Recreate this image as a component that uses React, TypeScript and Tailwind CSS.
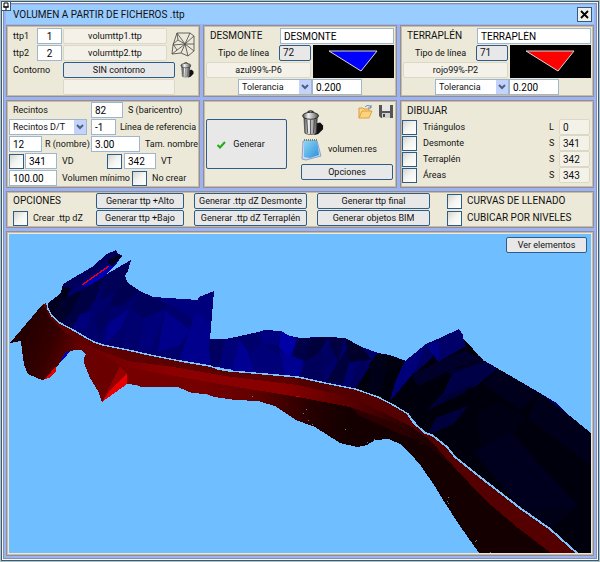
import React from "react";

type BoxProps = { className?: string };

function TextBox({ label, value, className = "" }: BoxProps & { label: string; value: string }) {
  return (
    <input
      type="text"
      aria-label={label}
      defaultValue={value}
      className={`h-4 min-w-0 rounded-none border border-[#9fb6cc] bg-white px-[3px] text-[10px] leading-[14px] text-black ${className}`}
    />
  );
}

function ReadOnlyBox({ label, value, className = "" }: BoxProps & { label: string; value: string }) {
  return (
    <input
      type="text"
      aria-label={label}
      value={value}
      readOnly
      className={`h-4 min-w-0 rounded-[2px] border border-[#dcd8c6] bg-[#f4f2e8] px-[3px] leading-[14px] ${className}`}
    />
  );
}

function PushButton({ children, className = "" }: BoxProps & { children: React.ReactNode }) {
  return (
    <button
      type="button"
      className={`flex items-center justify-center rounded-[2px] border border-[#2d5c88] bg-[#e8e8e8] leading-[14px] whitespace-nowrap ${className}`}
    >
      {children}
    </button>
  );
}

function Tick({ id, label }: { id: string; label?: string }) {
  return (
    <input
      id={id}
      type="checkbox"
      aria-label={label}
      className="size-[15px] shrink-0 appearance-none border border-[#2d5c88] bg-linear-to-br from-[#d6d6d0] via-[#f4f4f1] to-white checked:bg-[#2d5c88]"
    />
  );
}

function DropDown({ label, value, className = "" }: BoxProps & { label: string; value: string }) {
  return (
    <div className={`relative h-4 shrink-0 ${className}`}>
      <select
        aria-label={label}
        className="block h-4 w-full appearance-none border border-[#9fb6cc] bg-white pr-3 pl-[3px] leading-[14px]"
      >
        <option>{value}</option>
      </select>
      <span className="pointer-events-none absolute top-px right-px flex h-[14px] w-3 items-center justify-center bg-[#c3d3fb]">
        <svg width="8" height="6" viewBox="0 0 8 6">
          <path d="M1 1l3 3 3-3" fill="none" stroke="#4d6185" strokeWidth="2" />
        </svg>
      </span>
    </div>
  );
}

function Panel({ children, className = "" }: BoxProps & { children: React.ReactNode }) {
  return (
    <section className="border border-[#8e8f9c]">
      <div className={`h-full border border-[#c8bda2] bg-[#ece9d8] ${className}`}>{children}</div>
    </section>
  );
}

function TrashIcon({ className = "" }: BoxProps) {
  return (
    <svg viewBox="0 0 24 27" className={`shrink-0 ${className}`} aria-hidden="true">
      <defs>
        <linearGradient id="metal" x1="0" x2="1" y1="0" y2="0">
          <stop offset="0" stopColor="#4a4a4a" />
          <stop offset="0.35" stopColor="#f0f0f0" />
          <stop offset="0.7" stopColor="#a0a0a0" />
          <stop offset="1" stopColor="#4a4a4a" />
        </linearGradient>
      </defs>
      <path d="M15 14l5-1 3 3v4l-5 5-4 1z" fill="#111" />
      <path d="M3 7h14l-1 17c-2 2-10 2-12 0z" fill="url(#metal)" stroke="#333" strokeWidth="0.7" />
      <path d="M6 10l1 14M10 10v15M14 10l-1 14" stroke="#444" strokeWidth="0.9" />
      <ellipse cx="10" cy="6" rx="8.3" ry="3.6" fill="url(#metal)" stroke="#222" strokeWidth="0.9" />
      <path d="M7 3c0-3 6-3 6 0" fill="none" stroke="#333" strokeWidth="1.3" />
    </svg>
  );
}

function MeshIcon() {
  return (
    <svg viewBox="0 0 24 25" className="h-[25px] w-6 shrink-0" aria-hidden="true">
      <path
        d="M6 1h13l4 3v15l-6 5-7-3-9 1 1-9zM6 1l8 11L19 1M2 12l5-4 7 4 9-8M14 12l-4 9M14 12l3 12M14 12L1 22M2 13l12-1M14 12l9 0M14 12l9 7M6 1l1 7M2 12l4 6"
        fill="none"
        stroke="#555"
        strokeWidth="0.9"
      />
    </svg>
  );
}

type MaterialProps = { title: string; line: string; colour: string; fill: string };

function MaterialPanel({ title, line, colour, fill }: MaterialProps) {
  return (
    <Panel className="flex flex-col gap-px pt-px pr-px">
      <div className="flex h-4 items-center">
        <span className="w-[75px] shrink-0 pl-[5px] text-[10px]">{title}</span>
        <TextBox label={title} value={title} className="flex-1" />
      </div>
      <div className="flex gap-[2px]">
        <div className="flex w-[106px] shrink-0 flex-col gap-px pl-px">
          <div className="flex h-4 items-center justify-between">
            <span className="pl-3 whitespace-nowrap">Tipo de línea</span>
            <PushButton className="h-4 w-8 justify-start! pl-[3px] text-[10px]">{line}</PushButton>
          </div>
          <ReadOnlyBox label="Color" value={colour} className="w-full text-center" />
        </div>
        <svg viewBox="0 0 81 33" className="h-[33px] min-w-0 flex-1 bg-black" aria-hidden="true">
          <path d="M16 6h48L48 26z" fill={fill} stroke="#d8d8d8" strokeWidth="1" />
        </svg>
      </div>
      <div className="flex h-4 pl-[33px]">
        <DropDown label="Criterio" value="Tolerancia" className="w-[74px]" />
        <TextBox label="Valor" value="0.200" className="w-[50px]" />
      </div>
    </Panel>
  );
}

const drawRows = [
  { id: "tri", name: "Triángulos", kind: "L", code: "0" },
  { id: "des", name: "Desmonte", kind: "S", code: "341" },
  { id: "ter", name: "Terraplén", kind: "S", code: "342" },
  { id: "are", name: "Áreas", kind: "S", code: "343" },
];

const blueFacets: [string, string][] = [
  ["61,293 63,284 92,267 107,254 116,250 118,254 105,264 82,282 70,292", "#00005c"],
  ["82,284 110,264 122,255 117,263 105,276 92,284 84,287", "#0000b4"],
  ["107,262 118,254 122,256 112,266", "#00001c"],
  ["62,286 70,288 67,298 61,294", "#000018"],
  ["47,304 61,293 67,298 60,323 50,313", "#00001e"],
  ["60,300 82,290 72,312 60,323 54,316", "#00002c"],
  ["82,290 105,276 95,300 75,330 60,323 72,312", "#000044"],
  ["105,276 131,260 128,271 125,276 118,290 100,302", "#000058"],
  ["125,276 128,283 140,291 122,306 108,306", "#000052"],
  ["80,314 90,312 88,328 72,329", "#00007c"],
  ["95,318 112,300 108,322 98,336", "#000060"],
  ["140,291 153,297 170,300 150,322 130,312", "#00005e"],
  ["153,297 198,300 209,330 180,310", "#00007c"],
  ["108,324 130,308 120,330 104,344", "#00008a"],
  ["130,308 144,318 140,336 122,346", "#000070"],
  ["144,318 165,310 152,350 138,350", "#00007a"],
  ["165,310 190,330 180,345 158,352", "#00008a"],
  ["199,297 214,291 210,325 196,312", "#00007c"],
  ["196,312 210,325 210,366 180,360 186,340", "#00008c"],
  ["209,340 225,339 220,362 210,366", "#000060"],
  ["225,339 240,340 234,370 220,368", "#000078"],
  ["240,340 248,352 254,372 232,371", "#000092"],
  ["240,336 258,332 248,352", "#00006a"],
  ["258,332 264,330 281,331 278,345 262,343", "#000080"],
  ["281,331 290,336 297,339 290,358 279,348", "#0000a6"],
  ["262,343 280,357 282,375 254,373 250,354", "#000078"],
  ["280,352 292,356 304,358 300,378 284,376", "#000090"],
  ["297,339 309,338 306,362 293,356", "#000048"],
  ["309,338 328,337 320,352 306,361", "#00003c"],
  ["320,352 330,343 336,360 322,372", "#000060"],
  ["306,361 322,352 324,382 300,377", "#00005a"],
  ["328,337 345,338 338,362 332,350", "#000042"],
  ["338,362 350,344 352,352 343,384 326,382", "#00003c"],
  ["345,338 362,347 372,360 350,362", "#00002a"],
  ["356,368 362,360 370,366 356,388 350,387", "#00005c"],
  ["370,366 378,353 392,356 380,392 368,394", "#000018"],
  ["378,353 392,356 405,361 390,372", "#00000f"],
  ["405,361 415,353 426,344 418,368 390,401 396,380", "#000078"],
  ["426,344 440,338 432,358 414,374", "#000062"],
  ["426,344 446,340 438,362", "#000086"],
  ["440,338 459,329 463,338 466,346 438,362", "#000068"],
  ["412,376 438,362 466,350 483,361 460,366 418,386", "#00002a"],
  ["446,372 466,366 483,361 497,368 465,378", "#000030"],
  ["452,374 485,362 497,369 476,386 440,398 428,410 444,392", "#000046"],
  ["440,398 478,382 462,394 428,410", "#000034"],
  ["436,418 468,406 454,424 440,430 428,434", "#00003c"],
  ["484,384 497,369 540,393 520,410", "#00001c"],
  ["476,414 498,402 526,418 510,440 480,446", "#000014"],
  ["474,452 510,432 578,506 552,528 520,508", "#00001e"],
  ["540,393 565,412 591,433 591,465 528,418", "#00001a"],
  ["526,510 578,506 552,528", "#000016"],
];

const speckles: [number, number][] = [
  [252, 396], [306, 409], [303, 413], [308, 420], [312, 424], [345, 429], [367, 442], [374, 439], [448, 497],
  [447, 501], [448, 503], [476, 540], [475, 541], [490, 552], [478, 355], [483, 360], [137, 385], [207, 394],
];

const redOutline =
  "43,304 10,343 21,341 22,350 24,365 28,374 35,377 42,380 48,378 56,368 60,361 68,352 74,350 81,350 86,354 84,358 84,363 90,378 98,391 102,402 127,384 137,385 141,387 178,387 192,393 205,394 215,397 235,400 258,401 275,406 296,420 315,427 340,443 357,447 367,445 375,440 389,439 400,444 410,453 421,466 434,485 445,503 460,526 479,553 577,553 550,529 520,508 480,477 455,457 447,447 432,435 425,433 413,422 408,414 395,406 378,397 355,389 325,383 298,377 265,374 230,371 210,366 180,361 150,355 128,350 103,345 94,342 75,331 60,323 52,316 48,309 47,303";

function Terrain() {
  return (
    <svg viewBox="9 234 582 319" className="block w-full bg-[#6fbeff]" shapeRendering="crispEdges" role="img" aria-label="Modelo del terreno">
      <defs>
        <linearGradient id="low" gradientUnits="userSpaceOnUse" x1="200" y1="0" x2="350" y2="0">
          <stop offset="0" stopColor="#760000" />
          <stop offset="0.35" stopColor="#620000" />
          <stop offset="0.75" stopColor="#240000" />
          <stop offset="1" stopColor="#140000" />
        </linearGradient>
        <linearGradient id="mid" gradientUnits="userSpaceOnUse" x1="60" y1="0" x2="420" y2="0">
          <stop offset="0" stopColor="#600000" />
          <stop offset="0.3" stopColor="#8c0000" />
          <stop offset="0.62" stopColor="#880000" />
          <stop offset="0.85" stopColor="#4c0000" />
          <stop offset="1" stopColor="#200000" />
        </linearGradient>
        <linearGradient id="west" gradientUnits="userSpaceOnUse" x1="25" y1="330" x2="80" y2="352">
          <stop offset="0" stopColor="#240000" />
          <stop offset="0.5" stopColor="#360000" />
          <stop offset="1" stopColor="#680000" />
        </linearGradient>
      </defs>
      <polygon
        points="47,304 61,293 63,284 77,276 92,268 107,254 116,250 118,254 122,255 117,263 105,275 131,260 128,271 125,276 128,283 140,291 153,297 170,300 190,301 198,300 199,297 214,291 210,339 225,339 240,336 258,332 264,330 281,331 290,336 300,338 320,337 345,338 362,347 378,353 390,355 406,361 415,353 426,344 440,338 459,329 463,335 463,338 466,346 475,355 483,360 497,368 510,376 540,393 555,402 565,412 591,433 591,553 577,553 520,508 455,457 425,433 408,414 378,397 325,383 265,374 210,366 128,350 94,342 60,323 48,309"
        fill="#00006c"
      />
      <polygon
        points="378,353 406,361 426,344 440,338 463,338 483,360 540,393 591,433 591,553 577,553 520,508 455,457 425,433 408,414 378,397 350,388"
        fill="#00000c"
      />
      {blueFacets.map(([points, fill]) => (
        <polygon key={points} points={points} fill={fill} />
      ))}
      <path d="M82 285l27-19" stroke="#f00000" strokeWidth="1.3" />
      <polygon points={redOutline} fill="url(#low)" />
      <polygon
        points="43,304 10,343 21,341 22,350 24,365 28,374 42,380 48,378 56,368 68,352 74,350 81,350 86,354 92,345 66,333 50,316"
        fill="url(#west)"
      />
      <polygon points="44,379 51,372 56,366 56,372 49,378" fill="#e00000" />
      <polygon points="60,361 66,352 70,351 64,359" fill="#0000c0" />
      <polygon points="84,358 90,346 120,366 127,384 102,402 98,391 90,378 84,363" fill="#6a0000" />
      <polygon points="120,366 127,374 112,388 102,402" fill="#960000" />
      <polygon points="127,373 127,384 102,402 112,388" fill="#e80000" />
      <polygon points="47,305 52,316 60,323 75,331 94,342 103,345 128,350 180,361 225,371 298,378 355,389 395,406 413,422 436,440 453,466 430,448 400,427 350,407 298,397 225,385 120,366 100,352 66,333 50,318 44,305" fill="url(#mid)" />
      <polygon points="94,342 128,350 210,366 225,370 298,378 298,385 225,376 180,368 128,361 104,352 86,345 66,333 60,323 75,331" fill="#5c0000" />
      <polygon points="298,377 325,383 355,389 378,397 395,406 408,414 413,422 425,433 432,435 447,447 455,457 480,477 520,508 550,529 577,553 551,553 518,528 485,500 453,466 430,440 412,427 392,417 350,397 298,385" fill="#540000" />
      <polygon points="350,407 392,422 418,440 400,434 360,416" fill="#2c0000" />
      <path d="M296 397l4-1" stroke="#c00000" strokeWidth="1" />
      <polyline
        points="47,303 48,309 52,316 60,323 75,331 85,337 94,342 103,345 128,350 150,355 180,361 210,366 218,369 230,371 265,374 298,377 325,383 355,389 378,397 395,406 408,414 413,422 425,433 432,435 447,447 455,457 480,477 520,508 550,529 578,554"
        fill="none"
        stroke="#7cc4fa"
        strokeWidth="1.5"
      />
      <polyline points="408,414 413,422 425,433 432,435 447,447 455,457 480,477 520,508 550,529 578,554" fill="none" stroke="#7cc4fa" strokeWidth="2" />
      {speckles.map(([x, y]) => (
        <rect key={`${x}-${y}`} x={x} y={y} width="1" height="1" fill="#5a7fa8" />
      ))}
    </svg>
  );
}

export default function App() {
  return (
    <main className="relative min-h-screen bg-[#b4c3b8] p-px font-[Roboto,'Liberation_Sans',sans-serif] text-[9px] leading-[14px] text-[#111]">
      <div className="border border-[#35597f] bg-[#f4f8fb] p-px">
        <div className="border border-[#8290b4] bg-[#9db2ee] px-[2px] pt-px pb-[2px]">
          <header className="flex h-[19px] items-center justify-between bg-[#99ccff] pr-[2px] pl-[7px]">
            <h1 className="text-[10px]">VOLUMEN A PARTIR DE FICHEROS .ttp</h1>
            <button type="button" aria-label="Cerrar" className="flex size-[15px] items-center justify-center border border-[#35597f] bg-[#f0efe8]">
              <svg width="9" height="9" viewBox="0 0 9 9">
                <path d="M1 1l7 7M8 1L1 8" stroke="#000" strokeWidth="1.8" />
              </svg>
            </button>
          </header>

          <div className="mt-px flex flex-col gap-[3px]">
            <div className="grid grid-cols-3 gap-[3px]">
              <Panel className="flex flex-col gap-px pt-px pr-[3px] pl-[5px]">
                <div className="flex items-center gap-1">
                  <div className="flex min-w-0 flex-1 flex-col gap-px">
                    <div className="flex h-4 items-center">
                      <span className="w-6 shrink-0">ttp1</span>
                      <TextBox label="ttp1" value="1" className="mr-px w-[25px] text-center" />
                      <ReadOnlyBox label="Fichero ttp1" value="volumttp1.ttp" className="flex-1 text-center" />
                    </div>
                    <div className="flex h-4 items-center">
                      <span className="w-6 shrink-0">ttp2</span>
                      <TextBox label="ttp2" value="2" className="mr-px w-[25px] text-center" />
                      <ReadOnlyBox label="Fichero ttp2" value="volumttp2.ttp" className="flex-1 text-center" />
                    </div>
                  </div>
                  <MeshIcon />
                </div>
                <div className="flex h-4 items-center">
                  <span className="w-[50px] shrink-0">Contorno</span>
                  <PushButton className="mr-1 h-4 flex-1">SIN contorno</PushButton>
                  <TrashIcon className="h-4 w-4" />
                </div>
                <div className="flex h-4 pr-5 pl-[50px]">
                  <ReadOnlyBox label="Fichero de contorno" value="" className="flex-1" />
                </div>
              </Panel>
              <MaterialPanel title="DESMONTE" line="72" colour="azul99%-P6" fill="#0000ff" />
              <MaterialPanel title="TERRAPLÉN" line="71" colour="rojo99%-P2" fill="#ff0000" />
            </div>

            <div className="grid grid-cols-3 gap-[3px]">
              <Panel className="flex flex-col gap-px pl-px whitespace-nowrap">
                <div className="flex h-4 items-center">
                  <span className="w-[82px] pl-1">Recintos</span>
                  <TextBox label="Recintos" value="82" className="w-8" />
                  <span className="pl-[5px]">S (baricentro)</span>
                </div>
                <div className="flex h-4 items-center">
                  <DropDown label="Tipo de recintos" value="Recintos D/T" className="mr-1 w-[78px]" />
                  <TextBox label="Línea de referencia" value="-1" className="w-[25px]" />
                  <span className="pl-1">Línea de referencia</span>
                </div>
                <div className="flex h-4 items-center">
                  <TextBox label="R (nombre)" value="12" className="w-[33px]" />
                  <span className="w-[49px] pl-[3px]">R (nombre)</span>
                  <TextBox label="Tam. nombre" value="3.00" className="w-[49px]" />
                  <span className="pl-[5px]">Tam. nombre</span>
                </div>
                <div className="flex h-4 items-center">
                  <Tick id="vd" label="Activar VD" />
                  <TextBox label="VD" value="341" className="ml-px w-8" />
                  <span className="w-[50px] pl-[5px]">VD</span>
                  <Tick id="vt" label="Activar VT" />
                  <TextBox label="VT" value="342" className="ml-[2px] w-8" />
                  <span className="pl-[5px]">VT</span>
                </div>
                <div className="flex h-4 items-center">
                  <TextBox label="Volumen mínimo" value="100.00" className="w-12" />
                  <span className="w-[75px] pl-[5px]">Volumen mínimo</span>
                  <Tick id="nocrear" />
                  <label htmlFor="nocrear" className="pl-[5px]">No crear</label>
                </div>
              </Panel>

              <Panel className="flex items-center justify-between pr-[2px] pl-px">
                <PushButton className="h-[50px] w-[81px] gap-[6px] pr-3">
                  <svg width="11" height="11" viewBox="0 0 11 11" aria-hidden="true">
                    <path d="M1.500 6l2.500 2.500 5-5.500" fill="none" stroke="#1fae10" strokeWidth="2" />
                  </svg>
                  Generar
                </PushButton>
                <div className="flex h-full w-[92px] flex-col pt-[2px]">
                  <div className="flex h-8 items-start justify-between">
                    <TrashIcon className="mt-[6px] h-[26px] w-[23px]" />
                    <div className="flex gap-[6px]">
                      <svg width="15" height="15" viewBox="0 0 15 15" aria-label="Abrir" role="img">
                        <path d="M1 14V4h4l1 1h5v3" fill="#f8d98a" stroke="#d99a3c" />
                        <path d="M1 14l3-7h10l-3 7z" fill="#fbd37c" stroke="#e0a040" />
                        <path d="M7 3c2-2 4-2 6 0m0-2v3h-3" fill="none" stroke="#5a82b8" />
                      </svg>
                      <svg width="14" height="15" viewBox="0 0 14 15" aria-label="Guardar" role="img">
                        <path d="M0 1h14v13H2l-2-2z" fill="#555" />
                        <path d="M3 1h8v6H3z" fill="#e6e6e6" />
                        <path d="M3 9h8v5H3z" fill="#cfcfcf" />
                        <path d="M4 10h2v3H4z" fill="#444" />
                      </svg>
                    </div>
                  </div>
                  <div className="flex h-[26px] items-center gap-[6px]">
                    <svg width="21" height="23" viewBox="0 0 21 23" aria-hidden="true">
                      <defs>
                        <linearGradient id="pad" x1="0" y1="0" x2="1" y2="1">
                          <stop offset="0" stopColor="#8fd8f8" />
                          <stop offset="1" stopColor="#2c8fd8" />
                        </linearGradient>
                      </defs>
                      <path d="M2 3L1 21l4 1 15-4-4-15z" fill="#c8d8f0" stroke="#7e8fc0" strokeWidth="0.800" />
                      <path d="M3 2h13l2 15-9 3-6-1z" fill="url(#pad)" />
                      <path d="M3 2h13" stroke="#8a7a50" strokeWidth="2" strokeDasharray="1 1" />
                    </svg>
                    <span>volumen.res</span>
                  </div>
                  <PushButton className="mt-[2px] h-4 w-full">Opciones</PushButton>
                </div>
              </Panel>

              <Panel className="flex flex-col pt-px pr-[2px]">
                <h2 className="flex h-4 items-center pl-[5px] text-[10px]">DIBUJAR</h2>
                {drawRows.map((row) => (
                  <div key={row.id} className="flex h-4 items-center">
                    <Tick id={row.id} />
                    <label htmlFor={row.id} className="flex-1 pl-[6px]">{row.name}</label>
                    <span className="w-[10px]">{row.kind}</span>
                    <ReadOnlyBox label={`${row.name} ${row.kind}`} value={row.code} className="w-[31px] text-[10px]" />
                  </div>
                ))}
              </Panel>
            </div>

            <Panel className="flex pl-[5px] whitespace-nowrap">
              <div className="flex w-[83px] shrink-0 flex-col gap-px">
                <h2 className="flex h-4 items-center text-[10px]">OPCIONES</h2>
                <div className="flex h-4 items-center">
                  <Tick id="creardz" />
                  <label htmlFor="creardz" className="pl-[5px]">Crear .ttp dZ</label>
                </div>
              </div>
              <div className="mr-[10px] flex w-[88px] flex-col gap-px">
                <PushButton className="h-4">Generar ttp +Alto</PushButton>
                <PushButton className="h-4">Generar ttp +Bajo</PushButton>
              </div>
              <div className="mr-[10px] flex w-[113px] flex-col gap-px">
                <PushButton className="h-4">Generar .ttp dZ Desmonte</PushButton>
                <PushButton className="h-4">Generar .ttp dZ Terraplén</PushButton>
              </div>
              <div className="mr-[17px] flex w-[113px] flex-col gap-px">
                <PushButton className="h-4">Generar ttp final</PushButton>
                <PushButton className="h-4">Generar objetos BIM</PushButton>
              </div>
              <div className="flex flex-col gap-px text-[10px]">
                <div className="flex h-4 items-center">
                  <Tick id="curvas" />
                  <label htmlFor="curvas" className="pl-[5px]">CURVAS DE LLENADO</label>
                </div>
                <div className="flex h-4 items-center">
                  <Tick id="cubicar" />
                  <label htmlFor="cubicar" className="pl-[5px]">CUBICAR POR NIVELES</label>
                </div>
              </div>
            </Panel>

            <Panel className="relative p-px">
              <Terrain />
              <PushButton className="absolute top-1 right-[5px] h-4 w-[81px]">Ver elementos</PushButton>
            </Panel>
          </div>
        </div>
      </div>
      <button type="button" aria-label="Fijar ventana" className="absolute top-px left-px flex size-[10px] items-center justify-center border border-[#35597f] bg-white">
        <svg width="6" height="8" viewBox="0 0 6 8">
          <path d="M1 1h4v4H1zM0 5h6M3 5v3" fill="none" stroke="#000" />
        </svg>
      </button>
    </main>
  );
}
